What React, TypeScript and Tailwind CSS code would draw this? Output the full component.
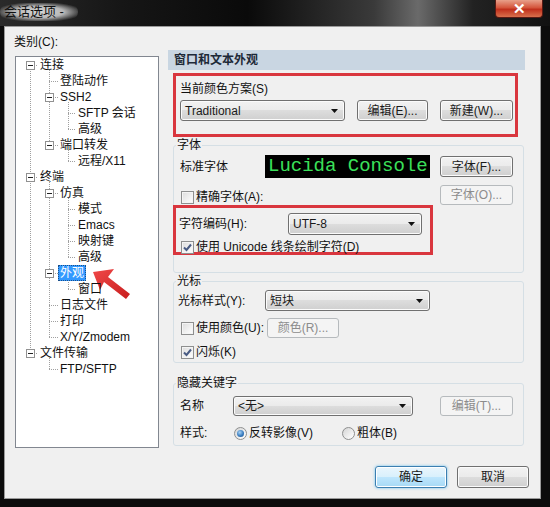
import type { ReactNode } from "react";

const FONT = "font-['Liberation_Sans','Noto_Sans_CJK_SC',sans-serif]";

function Btn({ children, className = "", disabled, primary }: { children: ReactNode; className?: string; disabled?: boolean; primary?: boolean }) {
  let look =
    "border-[#707070] bg-[linear-gradient(#f2f2f2_0%,#ebebeb_49%,#dddddd_50%,#cfcfcf_100%)] text-[#1a1a1a] shadow-[inset_0_0_0_1px_#fbfbfb]";
  if (disabled) look = "border-[#b6babd] bg-[#f4f4f4] text-[#8c8c8c]";
  if (primary)
    look =
      "border-[#3c7fb1] bg-[linear-gradient(#eaf6fd_0%,#d9f0fc_49%,#bee6fd_50%,#a7d9f5_100%)] text-[#1a1a1a] shadow-[inset_0_0_0_1px_#fff,0_0_3px_#6cc0ee]";
  return (
    <div className={`flex items-center justify-center rounded-[3px] border text-[12px] leading-none ${look} ${className}`}>
      {children}
    </div>
  );
}

function Combo({ value, className = "" }: { value: string; className?: string }) {
  return (
    <div
      className={`flex items-center justify-between rounded-[3px] border border-[#707070] bg-[linear-gradient(#f2f2f2_0%,#ebebeb_49%,#dddddd_50%,#cfcfcf_100%)] pl-[4px] pr-[6px] text-[12px] leading-none text-[#1a1a1a] shadow-[inset_0_0_0_1px_#fbfbfb] ${className}`}
    >
      <span>{value}</span>
      <svg width="7" height="4" viewBox="0 0 7 4">
        <polygon points="0,0 7,0 3.5,4" fill="#111" />
      </svg>
    </div>
  );
}

function Check({ checked, label }: { checked?: boolean; label: string }) {
  return (
    <div className="flex items-center gap-[2px]">
      <div className="flex h-[13px] w-[13px] items-center justify-center border border-[#8e8f8f] bg-[linear-gradient(135deg,#dcdcdc_0%,#f2f2f2_60%,#ffffff_100%)] shadow-[inset_0_0_0_1px_#f4f4f4]">
        {checked && (
          <svg width="9" height="9" viewBox="0 0 9 9">
            <path d="M1 4.5 L3.5 7 L8 1.5" stroke="#4a5c84" strokeWidth="2" fill="none" />
          </svg>
        )}
      </div>
      <span className="text-[12px] leading-[16px]">{label}</span>
    </div>
  );
}

function Radio({ checked, label }: { checked?: boolean; label: string }) {
  return (
    <div className="flex items-center gap-[2px]">
      <div className="flex h-[13px] w-[13px] items-center justify-center rounded-full border border-[#8e8f8f] bg-[linear-gradient(135deg,#d4d4d4_0%,#f4f4f4_70%,#ffffff_100%)]">
        {checked && (
          <div className="h-[7px] w-[7px] rounded-full bg-[radial-gradient(circle_at_40%_35%,#a9d3f5_0%,#3a7dc0_55%,#1c4f86_100%)]" />
        )}
      </div>
      <span className="text-[12px] leading-[16px]">{label}</span>
    </div>
  );
}

type Node = { text: string; level: 0 | 1 | 2; exp?: boolean; sel?: boolean };

const TREE: Node[] = [
  { text: "连接", level: 0, exp: true },
  { text: "登陆动作", level: 1 },
  { text: "SSH2", level: 1, exp: true },
  { text: "SFTP 会话", level: 2 },
  { text: "高级", level: 2 },
  { text: "端口转发", level: 1, exp: true },
  { text: "远程/X11", level: 2 },
  { text: "终端", level: 0, exp: true },
  { text: "仿真", level: 1, exp: true },
  { text: "模式", level: 2 },
  { text: "Emacs", level: 2 },
  { text: "映射键", level: 2 },
  { text: "高级", level: 2 },
  { text: "外观", level: 1, exp: true, sel: true },
  { text: "窗口", level: 2 },
  { text: "日志文件", level: 1 },
  { text: "打印", level: 1 },
  { text: "X/Y/Zmodem", level: 1 },
  { text: "文件传输", level: 0, exp: true },
  { text: "FTP/SFTP", level: 1 },
];

const VX = [14, 33, 52];
const TX = [24, 44, 62];
const yc = (i: number) => 8 + 16 * i;

// vertical connector runs: [level, fromRow, toRow]
const RUNS: [number, number, number][] = [
  [0, 0, 18],
  [1, 0, 5],
  [2, 2, 4],
  [2, 5, 6],
  [1, 7, 17],
  [2, 8, 12],
  [2, 13, 14],
  [1, 18, 19],
];

function TreeLines() {
  return (
    <svg className="absolute left-0 top-0" width="142" height="390">
      <g stroke="#a0a0a0" strokeWidth="1" strokeDasharray="1 1" shapeRendering="crispEdges">
        {RUNS.map(([lv, a, b], k) => (
          <line key={k} x1={VX[lv] + 0.5} x2={VX[lv] + 0.5} y1={yc(a) + (lv === 0 ? 0 : 5)} y2={yc(b)} />
        ))}
        {TREE.map((n, i) => (
          <line key={i} x1={VX[n.level]} x2={TX[n.level] - 2} y1={yc(i) + 0.5} y2={yc(i) + 0.5} />
        ))}
      </g>
      {TREE.map((n, i) =>
        n.exp ? (
          <g key={i} shapeRendering="crispEdges">
            <rect x={VX[n.level] - 4 + 0.5} y={yc(i) - 4 + 0.5} width="8" height="8" fill="#fff" stroke="#919191" />
            <line x1={VX[n.level] - 2} x2={VX[n.level] + 3} y1={yc(i) + 0.5} y2={yc(i) + 0.5} stroke="#222" />
          </g>
        ) : null
      )}
      {/* red annotation arrow */}
      <defs>
        <linearGradient id="ar" x1="0" y1="0" x2="1" y2="1">
          <stop offset="0" stopColor="#f04848" />
          <stop offset="1" stopColor="#c81e1e" />
        </linearGradient>
      </defs>
      <polygon points="77,215 98,212 92,220 114,237 110,242 88,225 84,233" fill="url(#ar)" />
    </svg>
  );
}

function Tree() {
  return (
    <div className="relative mt-[6px] h-[392px] w-[144px] border border-[#828790] bg-white">
      <TreeLines />
      <div className="relative flex flex-col text-[12px] leading-[16px] text-[#111]">
        {TREE.map((n, i) => (
          <div key={i} className="flex h-[16px] items-center">
            <div className={n.level === 0 ? "w-[24px]" : n.level === 1 ? (n.sel ? "w-[42px]" : "w-[44px]") : "w-[62px]"} />
            {n.sel ? (
              <span className="border border-dotted border-[#1b4f8a] bg-[#3399ff] px-[1px] leading-[14px] text-white">{n.text}</span>
            ) : (
              <span>{n.text}</span>
            )}
          </div>
        ))}
      </div>
    </div>
  );
}

function Group({ title, className = "", children }: { title: string; className?: string; children: ReactNode }) {
  return (
    <fieldset className={`ml-[5px] w-[351px] rounded-[3px] border border-[#d5dfe5] ${className}`}>
      <legend className="ml-[2px] px-[1px] text-[12px] leading-[16px]">{title}</legend>
      {children}
    </fieldset>
  );
}

export default function App() {
  return (
    <div className={`flex h-[507px] w-[550px] flex-col overflow-hidden bg-[#0c0c0c] text-[#111] ${FONT}`}>
      {/* title bar */}
      <div className="flex h-[26px] items-start justify-between bg-[linear-gradient(90deg,#2a2a2a_0%,#161616_22%,#0a0a0a_45%,#3a3a3a_68%,#6a6a6a_76%,#222_86%,#111_100%)]">
        <div className="mt-[3px] rounded-[12px] bg-[radial-gradient(ellipse_at_center,#d4d4d4_0%,#b8b8b8_45%,rgba(80,80,80,0)_80%)] py-[1px] pl-[4px] pr-[14px] text-[13px] leading-[16px] text-[#111]">
          会话选项 -
        </div>
        <div className="mr-[7px] flex h-[18px] w-[48px] items-center justify-center rounded-b-[4px] border border-t-0 border-[#5a1a14] bg-[linear-gradient(#e8a08a_0%,#d4553c_45%,#c0301c_55%,#d8704c_100%)] text-[15px] font-bold leading-none text-white">
          ✕
        </div>
      </div>

      {/* body */}
      <div className="ml-[4px] flex h-[473px] w-[537px] flex-col border border-[#9a9a9a] bg-[#f0f0f0]">
        <div className="flex">
          {/* left column */}
          <div className="flex w-[153px] flex-col pl-[10px]">
            <div className="-ml-[1px] mt-[7px] text-[12px] leading-[16px]">类别(C):</div>
            <Tree />
          </div>

          {/* right column */}
          <div className="ml-[10px] flex w-[357px] flex-col">
            <div className="mt-[23px] flex h-[20px] items-center bg-[#c9d6e2] pl-[6px] text-[12px] font-bold text-[#1e2a38]">
              窗口和文本外观
            </div>

            <div className="ml-[5px] mt-[3px] h-[64px] w-[345px] border-[3px] border-[#d9363e] pl-[4px] pt-[5px]">
              <div className="text-[12px] leading-[16px]">当前颜色方案(S)</div>
              <div className="mt-[3px] flex gap-[12px]">
                <Combo value="Traditional" className="h-[21px] w-[165px]" />
                <Btn className="h-[21px] w-[71px]">编辑(E)...</Btn>
                <Btn className="h-[21px] w-[73px]">新建(W)...</Btn>
              </div>
            </div>

            <Group title="字体" className="h-[136px]">
              <div className="mt-[2px] flex h-[23px] items-center pl-[6px]">
                <div className="w-[85px] text-[12px]">标准字体</div>
                <div className="flex h-[23px] w-[165px] items-center bg-black pl-[3px] font-['Liberation_Mono',monospace] text-[19px] leading-none text-[#3be05a]">
                  Lucida Console
                </div>
                <Btn className="ml-[10px] h-[21px] w-[73px] self-start mt-[1px]">字体(F)...</Btn>
              </div>
              <div className="mt-[7px] flex h-[20px] justify-between pl-[7px] pr-[10px]">
                <div className="self-end">
                  <Check label="精确字体(A):" />
                </div>
                <Btn disabled className="h-[20px] w-[73px]">字体(O)...</Btn>
              </div>
              <div className="-ml-[1px] h-[50px] w-[260px] border-[3px] border-[#d9363e] pl-[3px]">
                <div className="mt-[5px] flex h-[22px] items-center">
                  <div className="w-[109px] text-[12px]">字符编码(H):</div>
                  <Combo value="UTF-8" className="h-[22px] w-[134px]" />
                </div>
                <div className="mt-[4px] pl-[2px]">
                  <Check checked label="使用 Unicode 线条绘制字符(D)" />
                </div>
              </div>
            </Group>

            <Group title="光标" className="h-[90px]">
              <div className="mt-[1px] flex h-[21px] items-center pl-[4px]">
                <div className="w-[87px] text-[12px]">光标样式(Y):</div>
                <Combo value="短块" className="h-[21px] w-[165px]" />
              </div>
              <div className="mt-[7px] flex h-[20px] items-center pl-[7px]">
                <Check label="使用颜色(U):" />
                <Btn disabled className="ml-[3px] h-[20px] w-[72px]">颜色(R)...</Btn>
              </div>
              <div className="mt-[6px] pl-[7px]">
                <Check checked label="闪烁(K)" />
              </div>
            </Group>

            <Group title="隐藏关键字" className="mt-[12px] h-[71px]">
              <div className="mt-[5px] flex h-[20px] items-center pl-[6px]">
                <div className="w-[53px] text-[12px]">名称</div>
                <Combo value="<无>" className="h-[20px] w-[180px]" />
                <Btn disabled className="ml-[27px] h-[20px] w-[73px]">编辑(T)...</Btn>
              </div>
              <div className="mt-[9px] flex items-center pl-[6px]">
                <div className="w-[54px] text-[12px] leading-[16px]">样式:</div>
                <div className="w-[108px]">
                  <Radio checked label="反转影像(V)" />
                </div>
                <Radio label="粗体(B)" />
              </div>
            </Group>
          </div>
        </div>

        <div className="mt-auto flex justify-end gap-[10px] pb-[10px] pr-[11px]">
          <Btn primary className="h-[22px] w-[72px]">确定</Btn>
          <Btn className="h-[22px] w-[72px]">取消</Btn>
        </div>
      </div>
    </div>
  );
}
